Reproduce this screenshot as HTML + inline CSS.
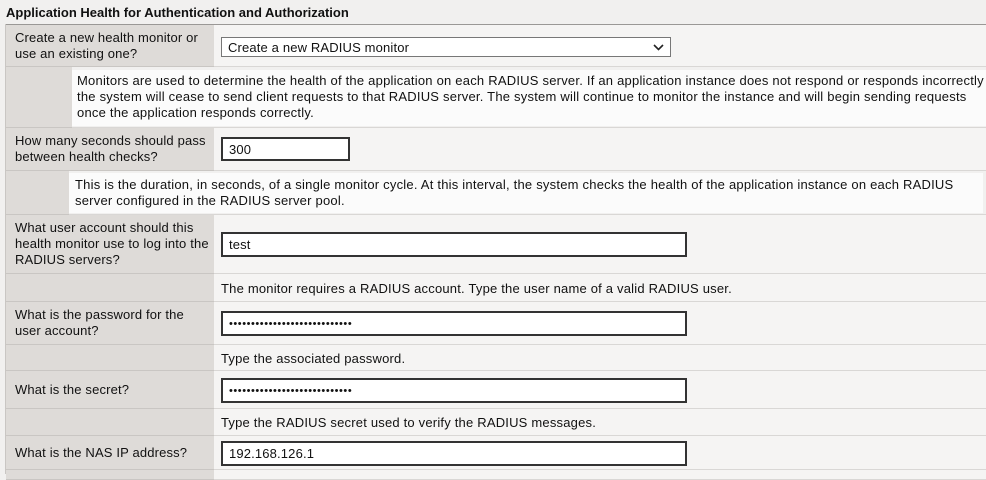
<!DOCTYPE html>
<html><head><style>
body{margin:0;width:986px;height:474px;background:#f1f0ef;font-family:"Liberation Sans",Arial,sans-serif;font-size:13px;letter-spacing:0.15px;color:#111;position:relative;overflow:hidden}
.a{position:absolute}
.h{left:6px;top:5px;font-weight:bold;font-size:13px;letter-spacing:0}
.lab{position:absolute;left:6px;width:208px;background:#dedbd8;border-bottom:1px solid #c9c6c3;box-sizing:border-box;padding-left:9px;display:flex;align-items:center;line-height:16px;white-space:nowrap}
.val{position:absolute;left:214px;right:0;background:#f5f4f3;border-bottom:1px solid #d9d7d5;box-sizing:border-box}
.help{position:absolute;background:#fbfbfb;line-height:16px;box-sizing:border-box;white-space:nowrap;letter-spacing:0.22px}
.in{position:absolute;left:221px;border:2px solid #333;background:#fff;box-sizing:border-box;padding-left:6px;display:flex;align-items:center;font-size:13px}
.dots{font-size:11px;letter-spacing:0.55px}
.ht{position:absolute;left:221px;display:flex;align-items:center;white-space:nowrap;letter-spacing:0.2px}
</style></head><body>
<div class="a h">Application Health for Authentication and Authorization</div>
<div class="a" style="left:5px;top:24px;width:981px;height:1px;background:#9a9896"></div>
<div class="a" style="left:5px;top:24px;width:1px;height:450px;background:#c9c6c3"></div>

<div class="lab" style="top:25px;height:42px">Create a new health monitor or<br>use an existing one?</div>
<div class="val" style="top:25px;height:42px"></div>
<div class="in" style="top:37px;width:450px;height:20px;border:1px solid #777;justify-content:space-between;padding-right:6px">Create a new RADIUS monitor<svg width="11" height="7" viewBox="0 0 11 7"><path d="M1 1 L5.5 5.5 L10 1" stroke="#222" stroke-width="1.6" fill="none"/></svg></div>

<div class="lab" style="top:67px;height:61px;width:66px"></div>
<div class="val" style="top:67px;height:61px;left:72px;background:#f1f0ef"></div>
<div class="help" style="left:72px;top:70px;width:914px;height:56px;padding:3px 0 0 5px">Monitors are used to determine the health of the application on each RADIUS server. If an application instance does not respond or responds incorrectly<br>the system will cease to send client requests to that RADIUS server. The system will continue to monitor the instance and will begin sending requests<br>once the application responds correctly.</div>

<div class="lab" style="top:128px;height:43px">How many seconds should pass<br>between health checks?</div>
<div class="val" style="top:128px;height:43px"></div>
<div class="in" style="top:137px;width:129px;height:24px">300</div>

<div class="lab" style="top:171px;height:44px;width:63px"></div>
<div class="val" style="top:171px;height:44px;left:69px;background:#f1f0ef"></div>
<div class="help" style="left:69px;top:173px;width:914px;height:40px;padding:4px 0 0 6px">This is the duration, in seconds, of a single monitor cycle. At this interval, the system checks the health of the application instance on each RADIUS<br>server configured in the RADIUS server pool.</div>

<div class="lab" style="top:215px;height:59px">What user account should this<br>health monitor use to log into the<br>RADIUS servers?</div>
<div class="val" style="top:215px;height:59px"></div>
<div class="in" style="top:232px;width:466px;height:25px">test</div>

<div class="lab" style="top:274px;height:28px"></div>
<div class="val" style="top:274px;height:28px"></div>
<div class="ht" style="top:274px;height:28px">The monitor requires a RADIUS account. Type the user name of a valid RADIUS user.</div>

<div class="lab" style="top:302px;height:43px">What is the password for the<br>user account?</div>
<div class="val" style="top:302px;height:43px"></div>
<div class="in dots" style="top:311px;width:466px;height:25px">••••••••••••••••••••••••••••</div>

<div class="lab" style="top:345px;height:26px"></div>
<div class="val" style="top:345px;height:26px"></div>
<div class="ht" style="top:345px;height:26px">Type the associated password.</div>

<div class="lab" style="top:371px;height:38px">What is the secret?</div>
<div class="val" style="top:371px;height:38px"></div>
<div class="in dots" style="top:378px;width:466px;height:25px">••••••••••••••••••••••••••••</div>

<div class="lab" style="top:409px;height:27px"></div>
<div class="val" style="top:409px;height:27px"></div>
<div class="ht" style="top:409px;height:27px">Type the RADIUS secret used to verify the RADIUS messages.</div>

<div class="lab" style="top:436px;height:34px">What is the NAS IP address?</div>
<div class="val" style="top:436px;height:34px"></div>
<div class="in" style="top:441px;width:466px;height:25px">192.168.126.1</div>
<div class="lab" style="top:470px;height:10px"></div>
<div class="val" style="top:470px;height:10px"></div>
</body></html>
